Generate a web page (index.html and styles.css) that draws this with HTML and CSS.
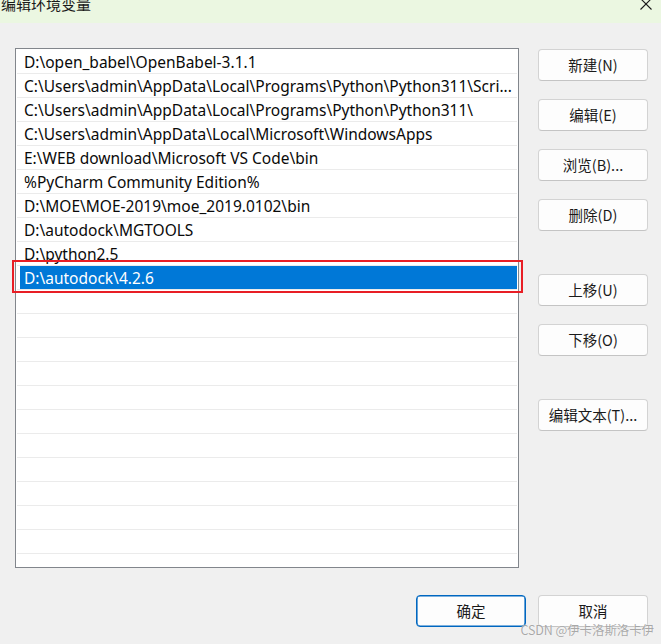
FILE: index.html
```html
<!DOCTYPE html>
<html lang="zh">
<head>
<meta charset="utf-8">
<title>编辑环境变量</title>
<link rel="stylesheet" href="styles.css">
</head>
<body>
<div class="window">
  <div class="titlebar">
    <span class="title">编辑环境变量</span>
    <svg class="close" width="12" height="12" viewBox="0 0 12 12"><path d="M0.5 0.5 L11.5 11.5 M11.5 0.5 L0.5 11.5" stroke="#1a1a1a" stroke-width="1.1" fill="none"/></svg>
  </div>
  <div class="content">
    <div class="main">
      <div class="listbox">
        <div class="row"><span class="item">D:\open_babel\OpenBabel-3.1.1</span></div>
        <div class="row"><span class="item">C:\Users\admin\AppData\Local\Programs\Python\Python311\Scri...</span></div>
        <div class="row"><span class="item">C:\Users\admin\AppData\Local\Programs\Python\Python311\</span></div>
        <div class="row"><span class="item">C:\Users\admin\AppData\Local\Microsoft\WindowsApps</span></div>
        <div class="row"><span class="item">E:\WEB download\Microsoft VS Code\bin</span></div>
        <div class="row"><span class="item">%PyCharm Community Edition%</span></div>
        <div class="row"><span class="item">D:\MOE\MOE-2019\moe_2019.0102\bin</span></div>
        <div class="row"><span class="item">D:\autodock\MGTOOLS</span></div>
        <div class="row"><span class="item">D:\python2.5</span></div>
        <div class="row selected"><span class="item">D:\autodock\4.2.6</span><span class="mark"></span></div>
        <div class="row"><span class="item"></span></div>
        <div class="row"><span class="item"></span></div>
        <div class="row"><span class="item"></span></div>
        <div class="row"><span class="item"></span></div>
        <div class="row"><span class="item"></span></div>
        <div class="row"><span class="item"></span></div>
        <div class="row"><span class="item"></span></div>
        <div class="row"><span class="item"></span></div>
        <div class="row"><span class="item"></span></div>
        <div class="row"><span class="item"></span></div>
        <div class="row"><span class="item"></span></div>
      </div>
      <div class="side">
        <div class="group">
          <button class="btn">新建(N)</button>
          <button class="btn">编辑(E)</button>
          <button class="btn">浏览(B)...</button>
          <button class="btn">删除(D)</button>
        </div>
        <div class="group">
          <button class="btn">上移(U)</button>
          <button class="btn">下移(O)</button>
        </div>
        <div class="group">
          <button class="btn">编辑文本(T)...</button>
        </div>
      </div>
    </div>
    <div class="footer">
      <button class="btn primary">确定</button>
      <button class="btn">取消</button>
    </div>
  </div>
  <div class="watermark">CSDN @伊卡洛斯洛卡伊</div>
</div>
</body>
</html>
```
FILE: styles.css
```css
html, body {
  margin: 0;
  padding: 0;
  background: #f0f0f0;
}
.window {
  position: relative;
  width: 661px;
  height: 644px;
  overflow: hidden;
  background: #f0f0f0;
  font-family: "Noto Sans", "Noto Sans CJK SC", sans-serif;
  color: #000;
}
.titlebar {
  height: 23px;
  background: #ebf7e1;
  display: flex;
  justify-content: space-between;
  align-items: flex-start;
  overflow: hidden;
}
.title {
  font-family: "Noto Sans CJK SC", sans-serif;
  font-size: 15px;
  line-height: 15px;
  margin-top: -4px;
  margin-left: 1px;
  color: #1a1a1a;
}
.close {
  margin-top: -2px;
  margin-right: 9px;
}
.content {
  padding-top: 25px;
}
.main {
  display: flex;
  align-items: flex-start;
  gap: 19px;
  padding-left: 15px;
}
.listbox {
  width: 502px;
  height: 517px;
  border: 1px solid #82868c;
  background: #fff;
  padding-top: 1px;
  box-sizing: content-box;
  overflow: visible;
}
.row {
  position: relative;
  margin-left: 1px;
  width: 500px;
  height: 23px;
  border-bottom: 1px solid #ebebeb;
}
.item {
  display: block;
  margin-left: 3px;
  padding-left: 4px;
  height: 23px;
  line-height: 25px;
  font-size: 15.5px;
  white-space: nowrap;
  overflow: hidden;
  color: #0a0a0a;
}
.selected .item {
  background: #0078d7;
  color: #fff;
}
.mark {
  position: absolute;
  left: -5px;
  right: -6px;
  top: -6px;
  bottom: -4px;
  border: 2px solid #e81e25;
  pointer-events: none;
}
.side {
  display: flex;
  flex-direction: column;
  gap: 43px;
  padding-top: 1px;
}
.group {
  display: flex;
  flex-direction: column;
  gap: 18px;
}
.btn {
  width: 110px;
  height: 32px;
  box-sizing: border-box;
  background: #fdfdfd;
  border: 1px solid #d3d3d3;
  border-bottom-color: #c4c4c4;
  border-radius: 4px;
  font-family: "Noto Sans CJK SC", sans-serif;
  font-size: 14.5px;
  color: #1a1a1a;
  padding: 0;
  margin: 0;
  line-height: 30px;
}
.primary {
  border: 1px solid #0067c0;
  box-shadow: inset 0 0 0 0.6px #0067c0;
}
.footer {
  display: flex;
  justify-content: flex-end;
  gap: 12px;
  padding-right: 13px;
  margin-top: 27px;
}
.watermark {
  position: absolute;
  right: 7px;
  bottom: 5px;
  font-family: "Noto Sans CJK SC", sans-serif;
  font-size: 12.5px;
  color: rgba(140, 140, 140, 0.75);
  text-shadow: 0 0 1px #fff;
  letter-spacing: -0.1px;
}
```
